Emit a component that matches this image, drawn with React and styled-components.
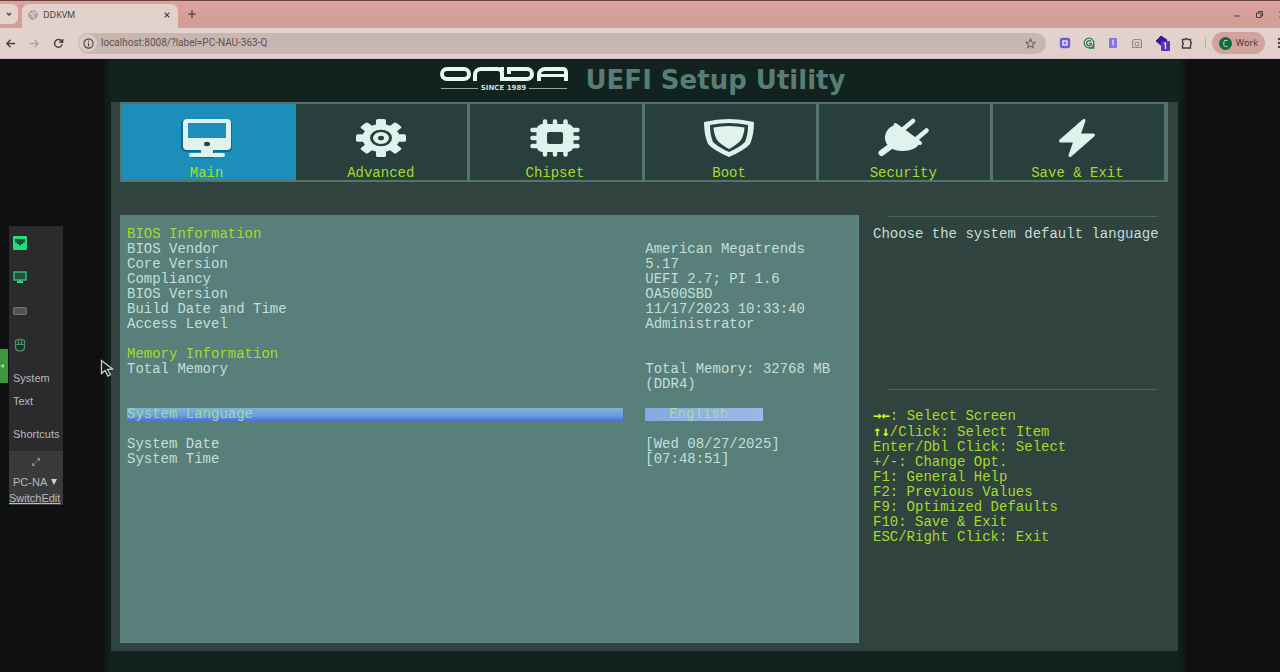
import React from "react";
import styled, { createGlobalStyle } from "styled-components";

const mono = `"Liberation Mono", "DejaVu Sans Mono", monospace`;
const lime = "#a4dc2c";
const line = "#55746b";

const Global = createGlobalStyle`
  *, *::before, *::after { box-sizing: border-box; }
  body { margin: 0; background: #0f1011; overflow-x: hidden; }
  button, input, select { font: inherit; color: inherit; border: 0; margin: 0; padding: 0; background: none; outline: none; }
  ul, h1, h2, p { margin: 0; padding: 0; list-style: none; font-weight: normal; }
  svg { display: block; flex: none; }
`;

const Page = styled.div`
  display: flex;
  flex-direction: column;
  min-height: 100vh;
  overflow: hidden;
`;

/* ---------- browser ---------- */

const Browser = styled.header`
  font-family: "Noto Sans", sans-serif;
  font-size: 9px;
  line-height: 12px;
  color: #4a3e3b;
`;

const TabStrip = styled.div`
  display: flex;
  align-items: flex-end;
  height: 28px;
  border-top: 1px solid #66463f;
  background: linear-gradient(#dda09f, #cd9f95);
`;

const TabSearch = styled.button`
  display: grid;
  place-items: center;
  width: 18px;
  height: 20px;
  margin-bottom: 4px;
  border-radius: 0 6px 6px 0;
  background: #e5d2cc;
`;

const PageTab = styled.div`
  display: flex;
  align-items: center;
  gap: 5px;
  width: 156px;
  height: 24px;
  margin-left: 4px;
  padding: 0 6px 2px;
  border-radius: 7px 7px 0 0;
  background: #e3d2cb;
`;

const TabTitle = styled.span`
  flex: 1;
`;

const IconButton = styled.button`
  display: grid;
  place-items: center;
  flex: none;
  width: ${(p) => p.$w || 24}px;
  height: 20px;
  color: ${(p) => p.$color || "inherit"};
`;

const WindowButtons = styled.div`
  display: flex;
  flex: none;
  margin-left: auto;
  margin-right: -14px;
  margin-bottom: 4px;
`;

const NewTab = styled(IconButton)`
  margin: 0 0 4px 2px;
`;

const Toolbar = styled.div`
  display: flex;
  align-items: center;
  height: 31px;
  background: linear-gradient(#e4d3cc, #e2cfcb);
  border-bottom: 1px solid #d2bfc2;
`;

const NavButtons = styled.div`
  display: flex;
  flex: none;
  margin-left: -2px;
  width: 80px;
`;

const Address = styled.label`
  display: flex;
  align-items: center;
  flex: 1;
  height: 21px;
  border-radius: 11px;
  background: #c8b6b1;
`;

const InfoDot = styled.span`
  display: grid;
  place-items: center;
  width: 18px;
  height: 18px;
  margin: 0 4px 0 1px;
  border-radius: 9px;
  background: #dccbc6;
`;

const UrlInput = styled.input`
  flex: 1;
  min-width: 0;
  height: 14px;
  font: 10px/14px Roboto, sans-serif;
  color: #5e524f;
`;

const Extensions = styled.div`
  display: flex;
  flex: none;
  margin-left: 7px;
`;

const Divider = styled.span`
  width: 1px;
  height: 12px;
  margin: 0 6px;
  background: #c3afa9;
`;

const Profile = styled.button`
  display: flex;
  align-items: center;
  gap: 4px;
  flex: none;
  height: 22px;
  padding: 0 7px;
  border-radius: 11px;
  background: #d2a29c;
`;

const Avatar = styled.span`
  width: 13px;
  height: 13px;
  border-radius: 7px;
  background: #14693f;
  color: #c9e6d4;
  font-size: 8px;
  line-height: 13px;
  text-align: center;
`;

/* ---------- remote viewer ---------- */

const Viewer = styled.div`
  position: relative;
  display: flex;
  flex: 1;
  padding-right: 94px;
`;

const Rail = styled.aside`
  display: flex;
  align-items: center;
  flex: none;
  width: 103px;
  font: 11px/14px "Liberation Sans", Arial, sans-serif;
  color: #b9babb;
`;

const RailHandle = styled.button`
  width: 8px;
  height: 34px;
  margin-right: 1px;
  background: #3f9440;
  color: #a5d8a5;
`;

const RailPanel = styled.div`
  display: flex;
  flex-direction: column;
  width: 54px;
  background: #2b2b2d;
`;

const RailIcons = styled.div`
  display: flex;
  flex-direction: column;
  gap: 14px;
  padding: 7px 0 0 4px;
`;

const RailIcon = styled.button`
  display: grid;
  place-items: center;
  width: 14px;
  height: 20px;
`;

const RailMenu = styled.div`
  display: flex;
  flex-direction: column;
  align-items: flex-start;
  padding: 16px 0 10px 4px;
`;

const RailItem = styled.button`
  height: 14px;
  margin-bottom: ${(p) => p.$gap || 0}px;
`;

const RailFoot = styled.div`
  display: flex;
  flex-direction: column;
  height: 54px;
  background: #3a3a3c;
`;

const Expand = styled.button`
  display: grid;
  place-items: center;
  height: 22px;
`;

const HostPick = styled.label`
  display: flex;
  align-items: center;
  justify-content: space-between;
  height: 18px;
  padding: 0 6px 0 4px;
`;

const HostSelect = styled.select`
  appearance: none;
  width: 38px;
`;

const RailLinks = styled.div`
  display: flex;
`;

const RailLink = styled.a`
  color: inherit;
  text-decoration: underline;
`;

const Pointer = styled.svg`
  position: absolute;
  left: 100px;
  top: 300px;
`;

/* ---------- setup utility ---------- */

const Screen = styled.main`
  display: flex;
  flex-direction: column;
  flex: 1;
  min-width: 0;
  padding: 0 8px 21px;
  background: linear-gradient(90deg, #101514, #12221e 8px, #12221e calc(100% - 8px), #101514);
  font-family: ${mono};
  font-size: 14px;
  line-height: 15px;
  color: #c3dfd8;
`;

const Banner = styled.div`
  display: flex;
  align-items: center;
  justify-content: center;
  gap: 15px;
  height: 43px;
  padding: 0 4px 2px 0;
`;

const Title = styled.h1`
  font: bold 26px/40px "DejaVu Sans", sans-serif;
  color: #587d74;
`;

const Logo = styled.div`
  width: 131px;
`;

const LogoMark = styled.div`
  display: flex;
  height: 14px;
  color: #e6f6f1;
`;

const LogoLoop = styled.span`
  width: 31px;
  margin-right: 2px;
  border: 4px solid;
  border-radius: 8px;
`;

const LogoArch = styled.span`
  width: ${(p) => p.$w}px;
  padding-top: 3px;
  border: 4px solid;
  border-bottom: 0;
  border-radius: ${(p) => p.$r};
  &::after {
    content: "";
    display: ${(p) => (p.$bar ? "block" : "none")};
    height: 3px;
    background: currentColor;
  }
`;

const LogoBow = styled.span`
  display: flex;
  width: 34px;
  margin: 0 3px 0 -4px;
  border: 4px solid;
  border-left: 0;
  border-radius: 0 8px 8px 6px;
  &::before {
    content: "";
    width: 3px;
    height: 6px;
    margin: -4px 0 0 4px;
    background: #12221e;
  }
  &::after {
    content: "";
    width: 4px;
    height: 3px;
    background: currentColor;
  }
`;

const LogoDate = styled.div`
  display: flex;
  align-items: center;
  gap: 3px;
  margin: 3px 4px 0 1px;
  font: bold 7px/8px "DejaVu Sans", sans-serif;
  color: #c9dfd9;
  white-space: nowrap;
  &::before, &::after {
    content: "";
    flex: 1;
    height: 1px;
    background: #8fa9a1;
  }
`;

const Frame = styled.div`
  display: flex;
  flex-direction: column;
  flex: 1;
  padding: 0 0 8px 9px;
  background: #30433e;
`;

const Tabs = styled.nav`
  display: grid;
  grid-template-columns: repeat(6, 1fr);
  height: 80px;
  margin-right: 10px;
  border: solid ${line};
  border-width: 2px 1px 2px 2px;
`;

const Tab = styled.button`
  display: flex;
  flex-direction: column;
  align-items: center;
  gap: 8px;
  padding-top: 14px;
  padding-right: 2px;
  border-right: 3px solid ${(p) => (p.$active ? "#1c90ba" : line)};
  background: ${(p) => (p.$active ? "#1b8fba" : "#293f3b")};
  color: ${lime};
  line-height: 14px;
`;

const TabArt = styled.span`
  display: grid;
  place-items: center;
  height: 40px;
`;

const Columns = styled.div`
  display: grid;
  grid-template-columns: minmax(0, 1fr) 319px;
  flex: 1;
  margin-top: 33px;
`;

const Panel = styled.section`
  padding: 12px 0 8px 7px;
  background: #587f7a;
  border: 1px solid #5d857e;
  border-width: 0 2px 1px 0;
`;

const Heading = styled.h2`
  font-size: 14px;
  color: ${lime};
`;

const InfoTable = styled.table`
  width: 100%;
  margin-bottom: 15px;
  table-layout: fixed;
  border-collapse: collapse;
  th, td { padding: 0; font-weight: normal; text-align: left; vertical-align: top; }
  th { width: 71%; }
`;

const Setting = styled.div`
  display: grid;
  grid-template-columns: 71% 1fr;
  height: 15px;
  align-items: center;
  margin-bottom: ${(p) => p.$gap || 0}px;
`;

const SettingLabel = styled.label`
  margin-right: 22px;
  height: ${(p) => (p.$active ? 13 : 15)}px;
  line-height: ${(p) => (p.$active ? 13 : 15)}px;
  color: ${(p) => (p.$active ? "#9fdc98" : "inherit")};
  background: ${(p) => (p.$active ? "linear-gradient(#7fb3d6, #6c9fe0 55%, #4a6ed8)" : "none")};
`;

const LanguageSelect = styled.select`
  appearance: none;
  width: 118px;
  height: 13px;
  padding-left: 24px;
  line-height: 13px;
  color: #a5dda2;
  background: linear-gradient(90deg, #86a9e2, #9ab9e4);
`;

const SettingInput = styled.input`
  width: 100%;
  height: 15px;
`;

const Side = styled.aside`
  display: flex;
  flex-direction: column;
  padding: 1px 14px 0;
`;

const Help = styled.p`
  height: 172px;
  padding-top: 10px;
  white-space: nowrap;
`;

const Rule = styled.hr`
  width: 100%;
  height: 1px;
  margin: 0;
  border: 0;
  background: linear-gradient(90deg, transparent 14px, #4b665d 16px, #4b665d calc(100% - 8px), transparent calc(100% - 6px));
`;

const Keys = styled.ul`
  padding-top: 18px;
  color: ${lime};
  white-space: nowrap;
`;

const Arrows = styled.b`
  font-family: "DejaVu Sans Mono", monospace;
  color: #c6ff1e;
`;

/* ---------- drawings ---------- */

const white = "#e0f2ed";

const MonitorArt = () => (
  <svg width="54" height="40" viewBox="0 0 54 40">
    <g transform="translate(1 0)">
      <path fill="#16506a" opacity=".6" fillRule="evenodd" d="M4 2h43q4 0 4 4v24q0 4-4 4H33v6H11q-2-2 0-3h10v-3H4q-4-2-4-4V5q0-3 4-3zM7 5v15h40V5z" />
      <path fill={white} fillRule="evenodd" d="M6 1h40q4 0 4 4v23q0 4-4 4H32v3h10q2 0 2 2t-2 2H10q-2 0-2-2t2-2h10v-3H6q-4 0-4-4V5q0-4 4-4zM7 5v15h38V5z" />
      <ellipse cx="26" cy="26" rx="3" ry="2.200" fill="#25404a" />
    </g>
  </svg>
);

const GearArt = () => (
  <svg width="50" height="38" viewBox="-25 -25 50 50" preserveAspectRatio="none">
    {[0, 45, 90, 135].map((a) => (
      <rect key={a} x="-5" y="-25" width="10" height="50" rx="2" fill={white} transform={`rotate(${a})`} />
    ))}
    <circle r="18.500" fill={white} />
    <circle r="9.500" fill="none" stroke="#293f3b" strokeWidth="3" />
    <circle r="3" fill="#293f3b" />
  </svg>
);

const ChipArt = () => (
  <svg width="50" height="38" viewBox="0 0 50 38">
    <g stroke={white} strokeWidth="4.500" strokeLinecap="round">
      <path d="M15 2.500v33M25 2.500v33M35.500 2.500v33M2.500 11h45M2.500 19h45M2.500 27h45" />
    </g>
    <rect x="6.500" y="5" width="37" height="28" rx="6" fill={white} />
    <rect x="17" y="13" width="16" height="12" rx="2" fill="#293f3b" />
  </svg>
);

const ShieldArt = () => (
  <svg width="52" height="40" viewBox="0 0 52 40">
    <path fill={white} d="M1 4Q14 1 26 1T51 4Q51 17 47 26Q42 32 26 39Q10 32 5 26Q1 17 1 4z" />
    <path fill="#293f3b" d="M7 7Q17 5 26 5T45 7Q45 17 42 24Q37 29 26 34Q15 29 10 24Q7 17 7 7z" />
    <path fill={white} d="M10.500 9.500Q18 8 26 8T41.500 9.500Q41 17 38 22Q35 26 26 31Q17 26 14 22Q11 17 10.500 9.500z" />
  </svg>
);

const PlugArt = () => (
  <svg width="52" height="40" viewBox="0 0 52 40">
    <g stroke={white} strokeLinecap="round" fill="none">
      <path strokeWidth="4.500" d="M27 10.500 36 3M40 20.500l9.500-8" />
      <path strokeWidth="6" d="M4.500 35 14 28" />
      <path strokeWidth="4" d="M18.500 7 43 25" />
    </g>
    <path fill={white} d="M18 7 43 25Q38 33 26 33Q18 33 14 30Q7 25 8 18Q9 10 18 7z" />
  </svg>
);

const BoltArt = () => (
  <svg width="40" height="40" viewBox="0 0 40 40">
    <path fill={white} stroke={white} strokeWidth="3" strokeLinejoin="round" d="M27 2.500 3.500 23H18l-5 14.500L36.500 17H22z" />
  </svg>
);

const Icon = ({ d, size = 12, w = 1.5, children }) => (
  <svg width={size} height={size} viewBox="0 0 12 12" fill="none" stroke="currentColor" strokeWidth={w}>
    {d && <path d={d} />}
    {children}
  </svg>
);

const tabs = [
  ["Main", MonitorArt],
  ["Advanced", GearArt],
  ["Chipset", ChipArt],
  ["Boot", ShieldArt],
  ["Security", PlugArt],
  ["Save & Exit", BoltArt],
];

const bios = [
  ["BIOS Vendor", "American Megatrends"],
  ["Core Version", "5.17"],
  ["Compliancy", "UEFI 2.7; PI 1.6"],
  ["BIOS Version", "OA500SBD"],
  ["Build Date and Time", "11/17/2023 10:33:40"],
  ["Access Level", "Administrator"],
];

const memory = [["Total Memory", "Total Memory: 32768 MB (DDR4)"]];

const keys = [
  ["→←", ": Select Screen"],
  ["↑↓", "/Click: Select Item"],
  ["", "Enter/Dbl Click: Select"],
  ["", "+/-: Change Opt."],
  ["", "F1: General Help"],
  ["", "F2: Previous Values"],
  ["", "F9: Optimized Defaults"],
  ["", "F10: Save & Exit"],
  ["", "ESC/Right Click: Exit"],
];

const Info = ({ rows }) => (
  <InfoTable>
    <tbody>
      {rows.map(([name, value]) => (
        <tr key={name}>
          <th scope="row">{name}</th>
          <td>{value}</td>
        </tr>
      ))}
    </tbody>
  </InfoTable>
);

function BrowserBar() {
  return (
    <Browser>
      <TabStrip>
        <TabSearch aria-label="Search tabs">
          <Icon size={8} w={2} d="M3 4.500 6 7.500 9 4.500" />
        </TabSearch>
        <PageTab>
          <Icon size={10} w={1}>
            <circle cx="6" cy="6" r="5" fill="#b8aca8" stroke="#8b817e" />
            <path d="M2 4q4 0 4 3t3 3M6 1q0 3 4 3" stroke="#efe5e1" />
          </Icon>
          <TabTitle>DDKVM</TabTitle>
          <IconButton $w={10} aria-label="Close tab">
            <Icon size={8} w={1.8} d="M2.500 2.500l7 7M9.500 2.500l-7 7" />
          </IconButton>
        </PageTab>
        <NewTab aria-label="New tab">
          <Icon size={10} d="M6 1.500v9M1.500 6h9" />
        </NewTab>
        <WindowButtons>
          <IconButton $w={22} aria-label="Minimize">
            <Icon size={8} d="M2 9h8" />
          </IconButton>
          <IconButton $w={22} aria-label="Restore">
            <Icon size={9} d="M2 4h6v6H2zM4.500 4V2H10v6H8" w={1.3} />
          </IconButton>
          <IconButton $w={24} aria-label="Close">
            <Icon size={9} d="M2 2l8 8M10 2l-8 8" />
          </IconButton>
        </WindowButtons>
      </TabStrip>
      <Toolbar>
        <NavButtons>
          <IconButton aria-label="Back">
            <Icon size={11} d="M11 6H2M6 2 2 6l4 4" />
          </IconButton>
          <IconButton $color="#b5a29d" aria-label="Forward">
            <Icon size={11} d="M1 6h9M6 2l4 4-4 4" />
          </IconButton>
          <IconButton aria-label="Reload">
            <Icon size={11} w={1.6} d="M10 7A4.200 4.200 0 1 1 9 3L10.500 4.500M10.500 1v3.700H7" />
          </IconButton>
        </NavButtons>
        <Address>
          <InfoDot>
            <Icon size={11} w={1.2}>
              <circle cx="6" cy="6" r="5" />
              <path d="M6 5.500V9M6 3v1.300" />
            </Icon>
          </InfoDot>
          <UrlInput aria-label="Address" defaultValue="localhost:8008/?label=PC-NAU-363-Q" />
          <IconButton $w={30} $color="#6d605d" aria-label="Bookmark">
            <Icon size={11} w={1.1} d="M6 1l1.500 3.400 3.500.3-2.700 2.400.9 3.600L6 8.800l-3.200 1.900.9-3.600L1 4.700l3.500-.3z" />
          </IconButton>
        </Address>
        <Extensions>
          <IconButton $color="#6a5bd6" aria-label="Recorder">
            <Icon size={12} w={2.4}>
              <rect x="2" y="2" width="8" height="8" rx="1.500" fill="#e4dcf5" />
              <circle cx="6" cy="6" r="1" strokeWidth="1" />
            </Icon>
          </IconButton>
          <IconButton $color="#2b8157" aria-label="Writing assistant">
            <Icon size={12} w={1.3}>
              <circle cx="6" cy="6" r="4.800" />
              <path d="M8 4.500A2.500 2.500 0 1 0 8.300 7.200V6.300H6M10.800 7v4H6" />
            </Icon>
          </IconButton>
          <IconButton $color="#7463d8" aria-label="Notes">
            <Icon size={12}>
              <rect x="2" y="1" width="8" height="10" rx="1" fill="#8573e2" stroke="none" />
              <path d="M5 3.500h1v5" stroke="#d8d0f5" />
            </Icon>
          </IconButton>
          <IconButton $w={25} $color="#968986" aria-label="Screenshot">
            <Icon size={12} w={1.1} d="M1.500 10.500V5q0-2.500 2.500-2.500h4q2.500 0 2.500 2.500v5.500zM6 5a2 2 0 1 1-.1 0" />
          </IconButton>
          <IconButton $w={26} aria-label="Workspace, 1 alert">
            <svg width="16" height="16" viewBox="0 0 16 16">
              <path d="M6 1l6 4-5 6-6-5z" fill="#3b1a9a" stroke="#3b1a9a" />
              <rect x="6" y="6" width="9" height="10" rx="1" fill="#5b34b8" />
              <path d="M9 9l1.500-1v6" fill="none" stroke="#e6dcfa" strokeWidth="1.300" />
            </svg>
          </IconButton>
          <IconButton $w={23} aria-label="Extensions">
            <Icon size={12} w={1.4} d="M1.500 2.500H4q1-2 2.500 0H9.500V5q2 1 0 2.500v3.500h-8V8q2-1.500 0-2.500z" />
          </IconButton>
        </Extensions>
        <Divider />
        <Profile>
          <Avatar>C</Avatar>
          Work
        </Profile>
        <IconButton $w={15} aria-label="Menu">
          <svg width="15" height="12" viewBox="0 0 15 12" fill="#4a3e3b">
            <circle cx="14" cy="2" r="1.200" />
            <circle cx="14" cy="6" r="1.200" />
            <circle cx="14" cy="10" r="1.200" />
          </svg>
        </IconButton>
      </Toolbar>
    </Browser>
  );
}

function SideRail() {
  return (
    <Rail>
      <RailHandle aria-label="Collapse">
        <svg width="5" height="6" viewBox="0 0 5 6">
          <path d="M4 1v4L0 3z" fill="currentColor" />
        </svg>
      </RailHandle>
      <RailPanel>
        <RailIcons>
          <RailIcon aria-label="Network">
            <svg width="14" height="14" viewBox="0 0 14 14">
              <rect width="14" height="14" rx="1" fill="#22de79" />
              <path d="M2 3h10v3l-2 1v1H8v1.500H6V8H4V7L2 6z" fill="#14532f" />
            </svg>
          </RailIcon>
          <RailIcon aria-label="Display">
            <svg width="14" height="12" viewBox="0 0 14 12">
              <rect x="1" y="1" width="12" height="8" fill="#24513c" stroke="#37b277" strokeWidth="1.500" />
              <path d="M4 11h6M7 9v2" stroke="#22de79" strokeWidth="2" />
            </svg>
          </RailIcon>
          <RailIcon aria-label="Keyboard">
            <svg width="14" height="8" viewBox="0 0 14 8">
              <rect x=".5" y=".5" width="13" height="7" rx="1" fill="#555659" stroke="#717276" />
              <path d="M3 3h8M3 5h8" stroke="#3d3e40" strokeDasharray="1 1" />
            </svg>
          </RailIcon>
          <RailIcon aria-label="Mouse">
            <svg width="12" height="14" viewBox="0 0 12 14" fill="none" stroke="#3c9a68" strokeWidth="1.200">
              <path d="M1.500 2.500q4.500-2.500 9 0V10q-1 3-4.500 3T1.500 10zM1.500 6.500h9M4.500 2v4.500M7.500 2v4.500" />
            </svg>
          </RailIcon>
        </RailIcons>
        <RailMenu>
          <RailItem $gap={9}>System</RailItem>
          <RailItem $gap={19}>Text</RailItem>
          <RailItem>Shortcuts</RailItem>
        </RailMenu>
        <RailFoot>
          <Expand aria-label="Full screen">
            <svg width="8" height="8" viewBox="0 0 8 8" fill="none" stroke="#8f9092">
              <path d="M5 .5h2.500V3M7 1 4.500 3.500M3 7.500H.5V5M1 7l2.500-2.500" />
            </svg>
          </Expand>
          <HostPick>
            <HostSelect aria-label="Host" defaultValue="PC-NA">
              <option>PC-NA</option>
            </HostSelect>
            <svg width="6" height="6" viewBox="0 0 6 6">
              <path d="M0 0h6L3 6z" fill="#cfd0d1" />
            </svg>
          </HostPick>
          <RailLinks>
            <RailLink href="#switch">Switch</RailLink>
            <RailLink href="#edit">Edit</RailLink>
          </RailLinks>
        </RailFoot>
      </RailPanel>
    </Rail>
  );
}

export default function App() {
  return (
    <Page>
      <Global />
      <BrowserBar />
      <Viewer>
        <SideRail />
        <Screen>
          <Banner>
            <Logo role="img" aria-label="ONDA, since 1989">
              <LogoMark>
                <LogoLoop />
                <LogoArch $w={31} $r="8px 6px 0 0" />
                <LogoBow />
                <LogoArch $w={31} $r="8px 5px 0 0" $bar />
              </LogoMark>
              <LogoDate>SINCE 1989</LogoDate>
            </Logo>
            <Title>UEFI Setup Utility</Title>
          </Banner>
          <Frame>
            <Tabs>
              {tabs.map(([name, Art], i) => (
                <Tab key={name} $active={i === 0}>
                  <TabArt>
                    <Art />
                  </TabArt>
                  {name}
                </Tab>
              ))}
            </Tabs>
            <Columns>
              <Panel>
                <Heading>BIOS Information</Heading>
                <Info rows={bios} />
                <Heading>Memory Information</Heading>
                <Info rows={memory} />
                <Setting $gap={15}>
                  <SettingLabel htmlFor="language" $active>System Language</SettingLabel>
                  <LanguageSelect id="language" defaultValue="English">
                    <option>English</option>
                  </LanguageSelect>
                </Setting>
                <Setting>
                  <SettingLabel htmlFor="date">System Date</SettingLabel>
                  <SettingInput id="date" defaultValue="[Wed 08/27/2025]" />
                </Setting>
                <Setting>
                  <SettingLabel htmlFor="time">System Time</SettingLabel>
                  <SettingInput id="time" defaultValue="[07:48:51]" />
                </Setting>
              </Panel>
              <Side>
                <Rule />
                <Help>Choose the system default language</Help>
                <Rule />
                <Keys>
                  {keys.map(([arrows, text]) => (
                    <li key={text}>
                      {arrows && <Arrows>{arrows}</Arrows>}
                      {text}
                    </li>
                  ))}
                </Keys>
              </Side>
            </Columns>
          </Frame>
        </Screen>
        <Pointer width="14" height="19" viewBox="0 0 14 19">
          <path d="M1.500 1.500v13l3.500-3 3 5.500 2.500-1.500-3-5 5-.5z" fill="#15181a" stroke="#c9cfd0" strokeWidth="1.300" />
        </Pointer>
      </Viewer>
    </Page>
  );
}
